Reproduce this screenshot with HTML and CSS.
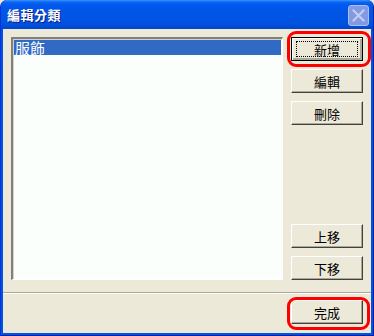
FILE: index.html
```html
<!DOCTYPE html>
<html>
<head>
<meta charset="utf-8">
<link rel="stylesheet" href="styles.css">
</head>
<body>
<div class="window">
  <div class="titlebar">
    <span class="title">編輯分類</span>
    <span class="close">
      <svg width="13" height="13" viewBox="0 0 13 13"><path d="M1.5 1.5 L11.5 11.5 M11.5 1.5 L1.5 11.5" stroke="#c3cdf0" stroke-width="2.2" stroke-linecap="square"/></svg>
    </span>
  </div>
  <div class="body">
    <div class="main">
      <div class="list">
        <div class="item selected">服飾</div>
      </div>
      <div class="buttons">
        <div class="group">
          <button class="btn default"><span class="focus">新增</span></button>
          <button class="btn">編輯</button>
          <button class="btn">刪除</button>
        </div>
        <div class="group">
          <button class="btn">上移</button>
          <button class="btn">下移</button>
        </div>
      </div>
    </div>
    <div class="separator"></div>
    <div class="footer">
      <button class="btn">完成</button>
    </div>
  </div>
  <div class="mark mark-add"></div>
  <div class="mark mark-done"></div>
</div>
</body>
</html>
```
FILE: styles.css
```css
* { box-sizing: border-box; }
html, body { margin: 0; padding: 0; background: #ece9d8; }
body { font-family: "Noto Sans CJK TC", "Noto Sans", sans-serif; }

.window {
  position: relative;
  width: 374px;
  height: 336px;
  background: #0054e3;
  border-radius: 7px 7px 0 0;
  display: flex;
  flex-direction: column;
  overflow: hidden;
  border-left: 1px solid #0831d9;
  border-right: 1px solid #001ea0;
  border-bottom: 1px solid #001ea0;
}

.titlebar {
  height: 29px;
  flex: none;
  display: flex;
  align-items: center;
  justify-content: space-between;
  padding: 0 4px 1px 6px;
  background: linear-gradient(to bottom, #3d95ff 0, #0a66f5 2px, #0058ee 5px, #0055e6 12px, #0054e3 20px, #0050db 25px, #0046cc 29px);
}

.title {
  color: #fff;
  font-weight: bold;
  font-size: 13px;
  letter-spacing: 0.5px;
  text-shadow: 1px 1px 0 #0a1883;
}

.close {
  width: 21px;
  height: 21px;
  margin-top: 2px;
  border: 1px solid #aebef0;
  border-radius: 3px;
  background: #8299e3;
  display: flex;
  align-items: center;
  justify-content: center;
}

.body {
  flex: 1;
  margin: 0 2px 2px 2px;
  background: #ece9d8;
  display: flex;
  flex-direction: column;
}

.main {
  display: flex;
  gap: 8px;
  padding: 8px 8px 12px 8px;
}

.list {
  width: 272px;
  height: 243px;
  background: #fbfffb;
  border-top: 2px solid #808080;
  border-left: 2px solid #808080;
  border-right: 1px solid #ffffff;
  border-bottom: 1px solid #ffffff;
  box-shadow: inset 1px 1px 0 #d4d0c8;
  padding: 1px 1px 0 1px;
}

.item {
  height: 15px;
  font-size: 15px;
  line-height: 15px;
  padding-left: 1px;
}
.item.selected {
  background: #316ac5;
  color: #fff;
}

.buttons {
  display: flex;
  flex-direction: column;
  justify-content: space-between;
  width: 72px;
}

.group {
  display: flex;
  flex-direction: column;
  gap: 8px;
}

.btn {
  width: 72px;
  height: 24px;
  padding: 0;
  margin: 0;
  font-family: "Noto Sans CJK TC", "Noto Sans", sans-serif;
  font-size: 13px;
  color: #000;
  background: #ece9d8;
  border-top: 1px solid #ffffff;
  border-left: 1px solid #ffffff;
  border-right: 1px solid #404040;
  border-bottom: 1px solid #404040;
  box-shadow: inset -1px -1px 0 #aca899;
  display: flex;
  align-items: center;
  justify-content: center;
}

.btn.default {
  border: 1px solid #000;
  box-shadow: inset 1px 1px 0 #fff, inset -2px -2px 0 #aca899;
}

.focus {
  display: flex;
  align-items: center;
  justify-content: center;
  width: 62px;
  height: 16px;
  border: 1px dotted #000;
}

.separator {
  height: 2px;
  border-top: 1px solid #aca899;
  border-bottom: 1px solid #ffffff;
}

.footer {
  display: flex;
  justify-content: flex-end;
  padding: 6px 8px 9px 8px;
}

.mark {
  position: absolute;
  border: 3px solid #ff0000;
  border-radius: 9px;
}
.mark-add { left: 286px; top: 31px; width: 84px; height: 36px; }
.mark-done { left: 286px; top: 297px; width: 83px; height: 33px; }
```
